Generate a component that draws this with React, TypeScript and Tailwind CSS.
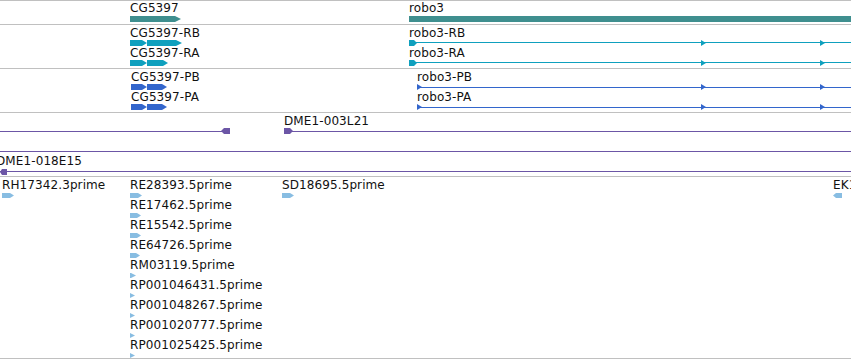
import React from 'react';

type Label = { x: number; y: number; text: string };
type Shape =
    | { kind: 'arrow'; x: number; y: number; w: number; h: number; head: number; dir?: 'l' | 'r' }
    | { kind: 'line'; x1: number; x2: number; y: number };

type Track = { height: number; color: string; labels: Label[]; shapes: Shape[] };

const TEAL = '#3f8f8f';
const CYAN = '#0fa0be';
const BLUE = '#3366cc';
const PURPLE = '#6c56a6';
const EST = '#88bde2';

// robo3 style transcript: long intron line with tiny direction ticks
function transcriptLine(x: number, y: number, lineY: number, startW: number, startHead: number): Shape[] {
    return [
        { kind: 'line', x1: x, x2: 851, y: lineY },
        { kind: 'arrow', x, y, w: startW, h: 6, head: startHead },
        { kind: 'arrow', x: 701, y, w: 5, h: 6, head: 5 },
        { kind: 'arrow', x: 820, y, w: 5, h: 6, head: 5 },
    ];
}

const estRows = [
    { text: 'RE28393.5prime', w: 12, head: 4 },
    { text: 'RE17462.5prime', w: 11, head: 4 },
    { text: 'RE15542.5prime', w: 11, head: 4 },
    { text: 'RE64726.5prime', w: 10, head: 4 },
    { text: 'RM03119.5prime', w: 6, head: 5 },
    { text: 'RP001046431.5prime', w: 5, head: 5 },
    { text: 'RP001048267.5prime', w: 5, head: 5 },
    { text: 'RP001020777.5prime', w: 5, head: 5 },
    { text: 'RP001025425.5prime', w: 5, head: 5 },
];

const tracks: Track[] = [
    {
        height: 23,
        color: TEAL,
        labels: [
            { x: 130, y: 1, text: 'CG5397' },
            { x: 409, y: 1, text: 'robo3' },
        ],
        shapes: [
            { kind: 'arrow', x: 130, y: 15, w: 51, h: 6, head: 6 },
            { kind: 'arrow', x: 409, y: 15, w: 442, h: 6, head: 0 },
        ],
    },
    {
        height: 43,
        color: CYAN,
        labels: [
            { x: 130, y: 2, text: 'CG5397-RB' },
            { x: 130, y: 22, text: 'CG5397-RA' },
            { x: 409, y: 2, text: 'robo3-RB' },
            { x: 409, y: 22, text: 'robo3-RA' },
        ],
        shapes: [
            { kind: 'arrow', x: 130, y: 15, w: 17, h: 6, head: 5 },
            { kind: 'arrow', x: 147, y: 15, w: 35, h: 6, head: 6 },
            { kind: 'arrow', x: 130, y: 35, w: 17, h: 6, head: 5 },
            { kind: 'arrow', x: 147, y: 35, w: 21, h: 6, head: 5 },
            ...transcriptLine(409, 15, 17, 8, 3),
            ...transcriptLine(409, 35, 37, 8, 3),
        ],
    },
    {
        height: 43,
        color: BLUE,
        labels: [
            { x: 131, y: 2, text: 'CG5397-PB' },
            { x: 131, y: 22, text: 'CG5397-PA' },
            { x: 417, y: 2, text: 'robo3-PB' },
            { x: 417, y: 22, text: 'robo3-PA' },
        ],
        shapes: [
            { kind: 'arrow', x: 131, y: 15, w: 16, h: 6, head: 5 },
            { kind: 'arrow', x: 147, y: 15, w: 20, h: 6, head: 5 },
            { kind: 'arrow', x: 131, y: 35, w: 16, h: 6, head: 5 },
            { kind: 'arrow', x: 147, y: 35, w: 20, h: 6, head: 5 },
            ...transcriptLine(417, 15, 18, 5, 5),
            ...transcriptLine(417, 35, 38, 5, 5),
        ],
    },
    {
        height: 63,
        color: PURPLE,
        labels: [
            { x: 284, y: 2, text: 'DME1-003L21' },
            { x: -4, y: 42, text: 'DME1-018E15' },
        ],
        shapes: [
            { kind: 'line', x1: 0, x2: 226, y: 18 },
            { kind: 'arrow', x: 221, y: 15, w: 9, h: 6, head: 3, dir: 'l' },
            { kind: 'line', x1: 288, x2: 851, y: 18 },
            { kind: 'arrow', x: 284, y: 15, w: 9, h: 6, head: 3 },
            { kind: 'line', x1: 0, x2: 851, y: 38 },
            { kind: 'line', x1: 0, x2: 851, y: 58 },
            { kind: 'arrow', x: 0, y: 56, w: 7, h: 6, head: 2, dir: 'l' },
        ],
    },
    {
        height: 181,
        color: EST,
        labels: [
            { x: 2, y: 2, text: 'RH17342.3prime' },
            { x: 282, y: 2, text: 'SD18695.5prime' },
            { x: 833, y: 2, text: 'EK130514.5prime' },
            ...estRows.map((r, i) => ({ x: 130, y: 2 + i * 20, text: r.text })),
        ],
        shapes: [
            { kind: 'arrow', x: 2, y: 16, w: 12, h: 5, head: 4 },
            { kind: 'arrow', x: 282, y: 16, w: 12, h: 5, head: 4 },
            { kind: 'arrow', x: 833, y: 16, w: 9, h: 5, head: 3, dir: 'l' },
            ...estRows.map(
                (r, i): Shape => ({ kind: 'arrow', x: 130, y: 16 + i * 20, w: r.w, h: 5, head: r.head })
            ),
        ],
    },
];

function arrowPoints(s: Extract<Shape, { kind: 'arrow' }>) {
    const { x, y, w, h, head } = s;
    const m = y + h / 2;
    if (s.dir === 'l') {
        return `${x},${m} ${x + head},${y} ${x + w},${y} ${x + w},${y + h} ${x + head},${y + h}`;
    }
    return `${x},${y} ${x + w - head},${y} ${x + w},${m} ${x + w - head},${y + h} ${x},${y + h}`;
}

function TrackView({ track }: { track: Track }) {
    return (
        <div className="relative w-full border-b border-[#c0c0c0] overflow-hidden" style={{ height: track.height + 1 }}>
            <svg className="absolute left-0 top-0" width={851} height={track.height}>
                {track.shapes.map((s, i) =>
                    s.kind === 'line' ? (
                        <rect key={i} x={s.x1} y={s.y} width={s.x2 - s.x1} height={1} fill={track.color} />
                    ) : (
                        <polygon key={i} points={arrowPoints(s)} fill={track.color} />
                    )
                )}
            </svg>
            {track.labels.map((l, i) => (
                <div
                    key={i}
                    className="absolute whitespace-nowrap text-[12px] leading-[12px] tracking-[0.1px] text-[#111]"
                    style={{ left: l.x, top: l.y }}
                >
                    {l.text}
                </div>
            ))}
        </div>
    );
}

export default function App() {
    return (
        <div className="w-[851px] h-[360px] bg-white overflow-hidden font-['DejaVu_Sans',sans-serif]">
            <div className="border-t border-[#c0c0c0]">
                {tracks.map((t, i) => (
                    <TrackView key={i} track={t} />
                ))}
            </div>
        </div>
    );
}
